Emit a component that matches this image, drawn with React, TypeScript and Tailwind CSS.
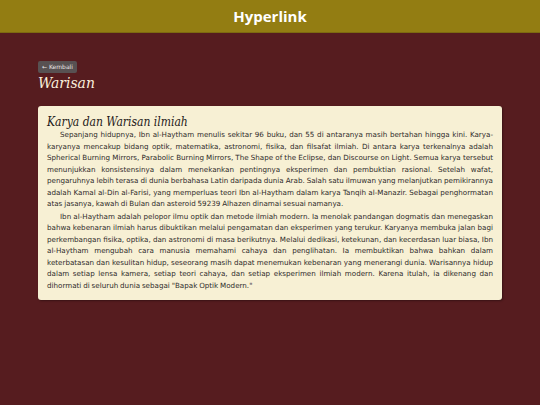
export default function App() {
  const sans = { fontFamily: '"DejaVu Sans", "Noto Sans", sans-serif' }
  const serif = { fontFamily: '"DejaVu Serif", "Liberation Serif", serif' }
  return (
    <div className="min-h-[405px] bg-[#561c1f]" style={sans}>
      {/* Header */}
      <header className="h-[33px] bg-[#937d12] border-b border-[#7d6a10] flex items-center justify-center">
        <h1 className="text-white font-bold text-[15px]" style={{ fontFamily: '"Open Sans", sans-serif' }}>
          Hyperlink
        </h1>
      </header>

      <main className="px-[38px] pt-[28px]">
        <button className="block bg-[#585152] text-[#e8e4e4] text-[6px] leading-none px-[4px] py-[3px] rounded-[2px]">
          ← Kembali
        </button>
        <h2 className="text-[#fbefdc] italic text-[15.5px] leading-[20px] [font-stretch:condensed]" style={serif}>
          Warisan
        </h2>

        <section className="mt-[13px] bg-[#f7f0d4] rounded-[3px] px-[9px] pt-[9px] pb-[9px] shadow-[1px_1px_2px_rgba(0,0,0,0.35)]">
          <h3 className="text-[#1f1a1a] italic text-[12px] leading-[14px] [font-stretch:condensed]" style={serif}>
            Karya dan Warisan ilmiah
          </h3>
          <div className="text-[#2f2b2b] text-[7.15px] leading-[11.5px] text-justify [word-spacing:-0.4px]">
            <p className="indent-[13px]">
              Sepanjang hidupnya, Ibn al-Haytham menulis sekitar 96 buku, dan 55 di antaranya masih bertahan hingga kini. Karya-karyanya mencakup bidang optik, matematika, astronomi, fisika, dan filsafat ilmiah. Di antara karya terkenalnya adalah Spherical Burning Mirrors, Parabolic Burning Mirrors, The Shape of the Eclipse, dan Discourse on Light. Semua karya tersebut menunjukkan konsistensinya dalam menekankan pentingnya eksperimen dan pembuktian rasional. Setelah wafat, pengaruhnya lebih terasa di dunia berbahasa Latin daripada dunia Arab. Salah satu ilmuwan yang melanjutkan pemikirannya adalah Kamal al-Din al-Farisi, yang memperluas teori Ibn al-Haytham dalam karya Tanqih al-Manazir. Sebagai penghormatan atas jasanya, kawah di Bulan dan asteroid 59239 Alhazen dinamai sesuai namanya.
            </p>
            <p className="indent-[13px] mt-[1px]">
              Ibn al-Haytham adalah pelopor ilmu optik dan metode ilmiah modern. Ia menolak pandangan dogmatis dan menegaskan bahwa kebenaran ilmiah harus dibuktikan melalui pengamatan dan eksperimen yang terukur. Karyanya membuka jalan bagi perkembangan fisika, optika, dan astronomi di masa berikutnya. Melalui dedikasi, ketekunan, dan kecerdasan luar biasa, Ibn al-Haytham mengubah cara manusia memahami cahaya dan penglihatan. Ia membuktikan bahwa bahkan dalam keterbatasan dan kesulitan hidup, seseorang masih dapat menemukan kebenaran yang menerangi dunia. Warisannya hidup dalam setiap lensa kamera, setiap teori cahaya, dan setiap eksperimen ilmiah modern. Karena itulah, ia dikenang dan dihormati di seluruh dunia sebagai "Bapak Optik Modern."
            </p>
          </div>
        </section>
      </main>
    </div>
  )
}
